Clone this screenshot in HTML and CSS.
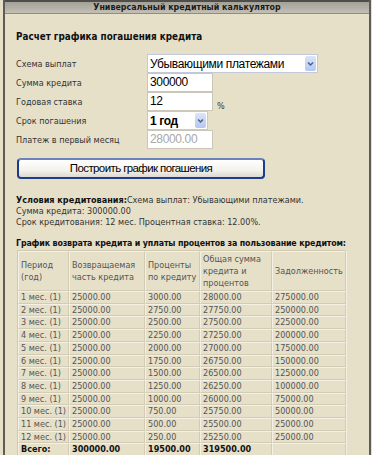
FILE: index.html
```
<!DOCTYPE html>
<html lang="ru">
<head>
<meta charset="utf-8">
<title>Универсальный кредитный калькулятор</title>
<link rel="stylesheet" href="styles.css">
</head>
<body>
<div class="frame">
  <div class="titlebar">Универсальный кредитный калькулятор</div>
  <div class="content">
    <h1 class="heading">Расчет графика погашения кредита</h1>
    <div class="form">
      <div class="label">Схема выплат</div>
      <div class="field"><div class="select wide"><span class="sel-text">Убывающими платежами</span><span class="arrow"><svg width="11" height="14" viewBox="0 0 11 14"><path d="M3 5.5 L5.5 8 L8 5.5" fill="none" stroke="#4d6185" stroke-width="1.5"/></svg></span></div></div>
      <div class="label">Сумма кредита</div>
      <div class="field"><div class="input">300000</div></div>
      <div class="label">Годовая ставка</div>
      <div class="field"><div class="input">12</div><span class="pct">%</span></div>
      <div class="label">Срок погашения</div>
      <div class="field"><div class="select narrow"><span class="sel-text">1 год</span><span class="arrow"><svg width="11" height="14" viewBox="0 0 11 14"><path d="M3 5.5 L5.5 8 L8 5.5" fill="none" stroke="#4d6185" stroke-width="1.5"/></svg></span></div></div>
      <div class="label">Платеж в первый месяц</div>
      <div class="field"><div class="input disabled">28000.00</div></div>
    </div>
    <div class="btn-row"><div class="button">Построить график погашения</div></div>
    <div class="conditions">
      <div><b>Условия кредитования:</b>Схема выплат: Убывающими платежами.</div>
      <div>Сумма кредита: 300000.00</div>
      <div>Срок кредитования: 12 мес. Процентная ставка: 12.00%.</div>
    </div>
    <div class="caption">График возврата кредита и уплаты процентов за пользование кредитом:</div>
    <table class="schedule">
      <colgroup><col class="c1"><col class="c2"><col class="c3"><col class="c4"><col class="c5"></colgroup>
      <tr class="head"><td>Период<br>(год)</td><td>Возвращаемая<br>часть кредита</td><td>Проценты<br>по кредиту</td><td>Общая сумма<br>кредита и<br>процентов</td><td>Задолженность</td></tr>
      <tr><td>1 мес. (1)</td><td>25000.00</td><td>3000.00</td><td>28000.00</td><td>275000.00</td></tr>
      <tr><td>2 мес. (1)</td><td>25000.00</td><td>2750.00</td><td>27750.00</td><td>250000.00</td></tr>
      <tr><td>3 мес. (1)</td><td>25000.00</td><td>2500.00</td><td>27500.00</td><td>225000.00</td></tr>
      <tr><td>4 мес. (1)</td><td>25000.00</td><td>2250.00</td><td>27250.00</td><td>200000.00</td></tr>
      <tr><td>5 мес. (1)</td><td>25000.00</td><td>2000.00</td><td>27000.00</td><td>175000.00</td></tr>
      <tr><td>6 мес. (1)</td><td>25000.00</td><td>1750.00</td><td>26750.00</td><td>150000.00</td></tr>
      <tr><td>7 мес. (1)</td><td>25000.00</td><td>1500.00</td><td>26500.00</td><td>125000.00</td></tr>
      <tr><td>8 мес. (1)</td><td>25000.00</td><td>1250.00</td><td>26250.00</td><td>100000.00</td></tr>
      <tr><td>9 мес. (1)</td><td>25000.00</td><td>1000.00</td><td>26000.00</td><td>75000.00</td></tr>
      <tr><td>10 мес. (1)</td><td>25000.00</td><td>750.00</td><td>25750.00</td><td>50000.00</td></tr>
      <tr><td>11 мес. (1)</td><td>25000.00</td><td>500.00</td><td>25500.00</td><td>25000.00</td></tr>
      <tr><td>12 мес. (1)</td><td>25000.00</td><td>250.00</td><td>25250.00</td><td>25000.00</td></tr>
      <tr class="total"><td>Всего:</td><td>300000.00</td><td>19500.00</td><td>319500.00</td><td></td></tr>
    </table>
  </div>
</div>
</body>
</html>
```
FILE: styles.css
```
html, body {
  margin: 0;
  padding: 0;
}
body {
  background: #e6e0c9;
  font-family: "DejaVu Sans Condensed", "DejaVu Sans", sans-serif;
  font-size: 9px;
  color: #333;
  width: 372px;
  height: 455px;
  overflow: hidden;
}
.frame {
  margin: 0 1px 0 3px;
  border-left: 2px solid #5e5c57;
  border-right: 2px solid #5e5c57;
  height: 455px;
  box-sizing: border-box;
}
.titlebar {
  height: 14px;
  box-sizing: border-box;
  border-top: 2px solid #4e4d49;
  border-bottom: 1px solid #8f8d85;
  background: linear-gradient(#a3a198, #c2bfb5);
  text-align: center;
  font-weight: bold;
  font-size: 8.8px;
  line-height: 11px;
  color: #1a1a1a;
}
.content {
  padding: 0 0 0 11px;
}
.heading {
  margin: 17px 0 0 0;
  font-size: 9.8px;
  line-height: 12px;
  font-weight: bold;
  color: #111;
}
.form {
  margin-top: 11px;
  display: grid;
  grid-template-columns: 131px auto;
}
.label {
  display: flex;
  align-items: center;
  color: #333;
  height: 19px;
}
.field {
  display: flex;
  align-items: flex-end;
  height: 19px;
}
.input {
  width: 66px;
  height: 19px;
  box-sizing: border-box;
  background: #fff;
  border: 1px solid #cbc7b8;
  font-family: "Liberation Sans", Arial, sans-serif;
  font-size: 12px;
  letter-spacing: -0.35px;
  line-height: 17px;
  padding-left: 2px;
  color: #000;
}
.input.disabled {
  color: #a8a8a8;
}
.pct {
  margin-left: 4px;
  font-size: 9px;
  line-height: 10px;
  color: #333;
}
.select {
  height: 19px;
  box-sizing: border-box;
  background: #fff;
  border: 1px solid #c3c9d9;
  display: flex;
  align-items: center;
  justify-content: space-between;
  padding: 0 1px 0 2px;
  font-family: "Liberation Sans", Arial, sans-serif;
  font-size: 12px;
  letter-spacing: -0.35px;
  color: #000;
}
.select.wide { width: 171px; }
.select.narrow { width: 61px; font-weight: bold; }
.arrow {
  width: 11px;
  height: 15px;
  border-radius: 2px;
  background: linear-gradient(#dbe5fb, #b4c7f0);
  display: flex;
  align-items: center;
}
.btn-row {
  margin-top: 9px;
  padding-left: 1px;
}
.button {
  width: 248px;
  height: 21px;
  box-sizing: border-box;
  border: 2px solid #1d3d8c;
  border-top-color: #6b83bd;
  border-radius: 4px;
  background: linear-gradient(#ffffff, #f3f2ec 60%, #dcdad0);
  text-align: center;
  font-family: "Liberation Sans", Arial, sans-serif;
  font-size: 11.5px;
  letter-spacing: -0.6px;
  line-height: 17px;
  color: #000;
}
.conditions {
  margin-top: 16px;
  line-height: 11px;
  color: #333;
}
.conditions b {
  color: #111;
}
.caption {
  margin-top: 9px;
  font-weight: bold;
  font-size: 8.8px;
  letter-spacing: -0.15px;
  line-height: 12px;
  color: #111;
}
.schedule {
  margin-left: 1px;
  margin-top: 1px;
  border-collapse: separate;
  border-spacing: 0;
  border: 1px solid #f3efe1;
  border-left-color: #d0cab3;
  border-top-color: #d0cab3;
  color: #555;
  font-size: 9px;
}
.schedule td {
  border: 1px solid;
  border-color: #f4f0e3 #d2ccb6 #d2ccb6 #f4f0e3;
  padding: 0 2px;
  height: 10.7px;
  line-height: 10.7px;
  white-space: nowrap;
  vertical-align: middle;
}
.schedule tr.head td {
  height: 38px;
  line-height: 12px;
}
.schedule tr.total td {
  font-weight: bold;
  color: #111;
}
col.c1 { width: 50px; }
col.c2 { width: 76px; }
col.c3 { width: 55px; }
col.c4 { width: 72px; }
col.c5 { width: 66px; }
```
